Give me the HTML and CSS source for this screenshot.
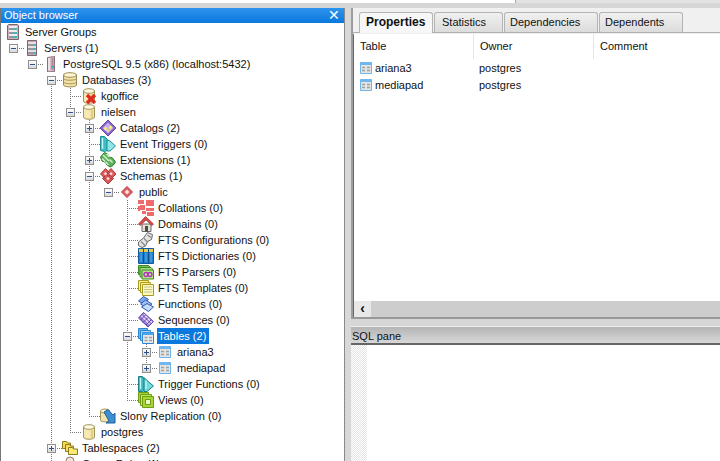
FILE: index.html
```html
<!DOCTYPE html>
<html lang="en">
<head>
<meta charset="utf-8">
<title>pgAdmin III</title>
<link rel="stylesheet" href="styles.css">
</head>
<body>
<svg class="sprite" xmlns="http://www.w3.org/2000/svg">
  <symbol id="ic-group" viewBox="0 0 16 16">
    <path d="M3.500 0.500h9l1 1v14h-11v-14z" fill="#c9b0bb" stroke="#7d6470"/>
    <path d="M4 3h8M4 7h8M4 11h8" stroke="#fff" stroke-width="1.400"/>
    <path d="M4 5h8M4 9h8M4 13h8" stroke="#7f8f9a" stroke-width="1.400"/>
    <path d="M9 5h3M9 9h3M9 13h3" stroke="#2fc0c0" stroke-width="1.400"/>
  </symbol>
  <symbol id="ic-server" viewBox="0 0 16 16">
    <path d="M3.500 0.500h9v15h-9z" fill="#c4a8b3" stroke="#7d6470"/>
    <path d="M4 3h8M4 7h8M4 11h8" stroke="#f4f0f2" stroke-width="1.500"/>
    <path d="M4 5h8M4 9h8M4 13h8" stroke="#8b8f9a" stroke-width="1.400"/>
    <path d="M9 5h3M9 9h3M9 13h3" stroke="#27c2c2" stroke-width="1.400"/>
  </symbol>
  <symbol id="ic-pg" viewBox="0 0 16 16">
    <path d="M4.500 1.500l7-1v15l-7 0.500z" fill="#d7bcc6" stroke="#8a6d78"/>
    <path d="M6 2v12" stroke="#f6eef1" stroke-width="1.500"/>
    <path d="M9.500 2v12" stroke="#a88c97" stroke-width="2"/>
    <path d="M8 11h3" stroke="#27b8c2" stroke-width="2"/>
  </symbol>
  <symbol id="ic-dbs" viewBox="0 0 16 16">
    <path d="M1.500 3v10c0 2.500 13 2.500 13 0V3z" fill="#f2e2a6" stroke="#9a8a52"/>
    <ellipse cx="8" cy="3" rx="6.500" ry="2.300" fill="#fff6d2" stroke="#9a8a52"/>
    <path d="M1.500 6.500c0 2.300 13 2.300 13 0M1.500 10c0 2.300 13 2.300 13 0" fill="none" stroke="#a8975c"/>
  </symbol>
  <symbol id="ic-db" viewBox="0 0 16 16">
    <path d="M2.500 3v10c0 3 11 3 11 0V3z" fill="#f6e9b4" stroke="#a39459"/>
    <ellipse cx="8" cy="3" rx="5.500" ry="2.300" fill="#fffbe6" stroke="#a39459"/>
    <path d="M11 5.500v9" stroke="#dfcd8a" stroke-width="2.500"/>
  </symbol>
  <symbol id="ic-dbx" viewBox="0 0 16 16">
    <use href="#ic-db"/>
    <path d="M6 7l8 8M14 7l-8 8" stroke="#e02a20" stroke-width="3.400"/>
  </symbol>
  <symbol id="ic-catalog" viewBox="0 0 16 16">
    <path d="M8 0L16 8 8 16 0 8z" fill="#8a62cc" stroke="#6a45a8"/>
    <path d="M8 2.500L13.500 8 8 13.500 2.500 8z" fill="#c4adef"/>
    <path d="M5.500 6.500L7.500 8.500 5.500 10.500 3.500 8.500zM10.500 5.500L12.500 7.500 10.500 9.500 8.500 7.500zM8 9L9.500 10.500 8 12 6.500 10.500z" fill="#f6f06a"/>
  </symbol>
  <symbol id="ic-trigger" viewBox="0 0 16 16">
    <path d="M0.500 0.500l4 0 4 4V14l-4 1.500-4-1z" fill="#3fbcc4" stroke="#1f8f96"/>
    <path d="M7 4l3 1 5.500 5-5.500 5-3 0z" fill="#8fe6e6" stroke="#1f8f96"/>
    <path d="M2.500 2v11" stroke="#c8f4f4" stroke-width="1.400"/>
  </symbol>
  <symbol id="ic-ext" viewBox="0 0 16 16">
    <path d="M0.500 5l4-4.500 3 1.500 2 3 3 1 3 4-2.500 3.500-3 1.500-3-2-2-3-3-1z" fill="#5cb05c" stroke="#2a7a30"/>
    <path d="M3 3l3 3M6.500 2l3 3M2 6.500l3 3M6 6l3 3M5.500 10l3 3M9.500 7.500l3 3" stroke="#d2f0cc" stroke-width="1.500"/>
  </symbol>
  <symbol id="ic-schemas" viewBox="0 0 16 16">
    <path d="M5.500 0.500L11 6 5.500 11 0.500 6zM11 0.500L16 6l-5 5-5-5zM8 5l5.500 5.500L8 16 2.500 10.500z" fill="#dc5c5c" stroke="#b03636"/>
    <path d="M5.500 4L7.300 5.800 5.500 7.600 3.700 5.800zM11 4l1.800 1.800L11 7.600 9.200 5.800zM8 8.700l1.800 1.800L8 12.300 6.200 10.500z" fill="#fcdede"/>
  </symbol>
  <symbol id="ic-schema" viewBox="0 0 16 16">
    <path d="M8 2.500L13.500 8 8 13.500 2.500 8z" fill="#dc5f5f" stroke="#b83a3a"/>
    <path d="M8 5.500L10.500 8 8 10.500 5.500 8z" fill="#fcdede"/>
  </symbol>
  <symbol id="ic-coll" viewBox="0 0 16 16">
    <path d="M0 0h6v4H0zM8 0h8v6H8zM2 5h5v5H2zM0 6h2v5H0zM8 8h8v3H8zM9 12h7v4H9zM4 11h4v3H4z" fill="#ee6c6c"/>
  </symbol>
  <symbol id="ic-domain" viewBox="0 0 16 16">
    <path d="M4 8h9v7.500H4z" fill="#e6e0d6" stroke="#6b6b6b"/>
    <path d="M7 10h3v5.500H7z" fill="#4b4b4b"/>
    <path d="M0.500 8L7.500 0.500 15.500 8 14 9.500 8 4 2 9.500z" fill="#d84a4a" stroke="#a02c2c" stroke-width=".7"/>
  </symbol>
  <symbol id="ic-ftsc" viewBox="0 0 16 16">
    <path d="M0.500 10l5-4 4-5.500 5 2-1 5-4 2-2 4.500-3.500 1.500-3.500-2z" fill="#e4e4e4" stroke="#666"/>
    <path d="M3 9.500l4 4M6 6.500l4 4M9.500 3l3.500 2.500" stroke="#888" stroke-width="1.200"/>
  </symbol>
  <symbol id="ic-ftsd" viewBox="0 0 16 16">
    <path d="M0.500 0.500h15v15h-15z" fill="#1c7fd0" stroke="#155c9e"/>
    <path d="M1 1h14v3H1z" fill="#e4c94a"/>
    <path d="M5.500 1v14M10.500 1v14" stroke="#0d4f8e"/>
    <path d="M3 5v9M8 5v9M13 5v9" stroke="#63aee6"/>
  </symbol>
  <symbol id="ic-ftsp" viewBox="0 0 16 16">
    <path d="M0.500 1.500h10l2 2v7h-12z" fill="#6fc04c" stroke="#3e8a2a"/>
    <path d="M2 3.500h11l1.500 1.500v8H2z" fill="#a4dd7d" stroke="#3e8a2a"/>
    <path d="M4 6h11.500v9H4z" fill="#b9e68c" stroke="#3e8a2a"/>
    <circle cx="8" cy="10.500" r="2" fill="none" stroke="#b02ec0" stroke-width="1.300"/>
    <circle cx="12" cy="10.500" r="2" fill="none" stroke="#b02ec0" stroke-width="1.300"/>
  </symbol>
  <symbol id="ic-ftst" viewBox="0 0 16 16">
    <path d="M0.500 0.500h10v10h-10z" fill="#fbf08a" stroke="#a99a20"/>
    <path d="M2.500 2.500h10v10h-10z" fill="#fbf08a" stroke="#a99a20"/>
    <path d="M4.500 4.500h11v11h-11z" fill="#fdf7c0" stroke="#a99a20"/>
    <path d="M6.500 7h7M6.500 9.500h7M6.500 12h7" stroke="#8a8a55" stroke-dasharray="1 1"/>
  </symbol>
  <symbol id="ic-func" viewBox="0 0 16 16">
    <path d="M0.500 5l5-4.500 5 3-5 4.500z" fill="#7aa8ee" stroke="#3058b0"/>
    <path d="M2.500 8l5-4 6.500 4-5 4z" fill="#9ec2f5" stroke="#3058b0"/>
    <path d="M3.500 11l5.500-3.500 6.500 3.500-5 4.500z" fill="#c6dcfa" stroke="#3058b0"/>
  </symbol>
  <symbol id="ic-seq" viewBox="0 0 16 16">
    <path d="M0.500 6l5-5.500 10 9-5.500 5.500z" fill="#9d7fdc" stroke="#5f44a0"/>
    <path d="M3.500 4l8 8M6 2.500l8 8" stroke="#eee6fb" stroke-width="1.200"/>
    <path d="M2.500 8l5-5M5 10.500l5-5M8 13l5-5" stroke="#5f44a0"/>
  </symbol>
  <symbol id="ic-tables" viewBox="0 0 16 16">
    <path d="M0.500 0.500h9v10h-9z" fill="#6db5ef" stroke="#2e86d0"/>
    <path d="M2.500 2.500h10v10h-10z" fill="#a7d5f6" stroke="#2e86d0"/>
    <path d="M4.500 4.500h11v11h-11z" fill="#e6e8e8" stroke="#2e86d0"/>
    <path d="M4.500 4.500h11v2.500h-11z" fill="#4ea6ea"/>
    <path d="M6.500 9.500h3M11 9.500h3M6.500 12.500h3M11 12.500h3" stroke="#a0a0a0" stroke-width="1.500"/>
  </symbol>
  <symbol id="ic-table" viewBox="0 0 16 16">
    <path d="M2.500 2.500h11v11h-11z" fill="#e2e5e5" stroke="#6fb4e8"/>
    <path d="M2.500 2.500h11v2.500h-11z" fill="#6fb8ef"/>
    <path d="M4 7.500h3M9 7.500h3M4 10.500h3M9 10.500h3" stroke="#a0a0a0" stroke-width="1.500"/>
  </symbol>
  <symbol id="ic-tfunc" viewBox="0 0 16 16">
    <path d="M0.500 0.500h4l3 4v9.500l-3 1.500h-4z" fill="#3fb8bc" stroke="#1a7f86"/>
    <path d="M6 1.500l3 3 6.500 5.500-6.500 5.500H6z" fill="#6cdcdc" stroke="#1a7f86"/>
    <path d="M2.500 2v11M8 5v8" stroke="#c8f4f4" stroke-width="1.300"/>
  </symbol>
  <symbol id="ic-views" viewBox="0 0 16 16">
    <path d="M0.500 0.500h10v10h-10z" fill="#a4d636" stroke="#6f9e15"/>
    <path d="M2.500 2.500h11v11h-11z" fill="#bfe75a" stroke="#6f9e15"/>
    <path d="M4.500 4.500h11v11h-11z" fill="#a4d636" stroke="#6f9e15"/>
    <path d="M7.500 7.500h5v5h-5z" fill="#eff9c8" stroke="#6f9e15"/>
  </symbol>
  <symbol id="ic-slony" viewBox="0 0 16 16">
    <path d="M0.500 3v9c0 2.500 9 2.500 9 0V3z" fill="#f2e4ae" stroke="#a39459"/>
    <ellipse cx="5" cy="3" rx="4.500" ry="2" fill="#fff8dc" stroke="#a39459"/>
    <path d="M4 4l4-2.500 5 5.500 2-2v10H6l3-2z" fill="#3e8fd2" stroke="#1f5f9d"/>
  </symbol>
  <symbol id="ic-tspace" viewBox="0 0 16 16">
    <path d="M0.500 1.500h4l1 1.500h3v5.500h-8z" fill="#f6d95a" stroke="#8f7a16"/>
    <path d="M3.500 4.500h4l1 1.500h3v5.500h-8z" fill="#f8df66" stroke="#8f7a16"/>
    <path d="M6.500 7.500h4l1 1.500h4v5.500h-9z" fill="#fae878" stroke="#8f7a16"/>
  </symbol>
  <symbol id="ic-role" viewBox="0 0 16 16">
    <circle cx="8" cy="5" r="4" fill="#f5e3d6" stroke="#8a7a70"/>
    <path d="M2 15c0-5 12-5 12 0z" fill="#d9c4b6" stroke="#8a7a70"/>
  </symbol>
</svg>

<div class="app">
  <div class="topstrip"><div class="topstrip-left"></div></div>
  <div class="main">
    <section class="browser">
      <header class="browser-title"><span>Object browser</span><span class="close">✕</span></header>
      <div class="tree">
        <div class="row"><svg class="icon"><use href="#ic-group"/></svg><span class="label">Server Groups</span></div>
        <div class="row"><span class="c h"><i class="x minus"></i></span><svg class="icon"><use href="#ic-server"/></svg><span class="label">Servers (1)</span></div>
        <div class="row"><span class="c"></span><span class="c h"><i class="x minus"></i></span><svg class="icon"><use href="#ic-pg"/></svg><span class="label">PostgreSQL 9.5 (x86) (localhost:5432)</span></div>
        <div class="row"><span class="c"></span><span class="c"></span><span class="c s"><i class="x minus"></i></span><svg class="icon"><use href="#ic-dbs"/></svg><span class="label">Databases (3)</span></div>
        <div class="row"><span class="c"></span><span class="c"></span><span class="c v"></span><span class="c t"></span><svg class="icon"><use href="#ic-dbx"/></svg><span class="label">kgoffice</span></div>
        <div class="row"><span class="c"></span><span class="c"></span><span class="c v"></span><span class="c t"><i class="x minus"></i></span><svg class="icon"><use href="#ic-db"/></svg><span class="label">nielsen</span></div>
        <div class="row"><span class="c"></span><span class="c"></span><span class="c v"></span><span class="c v"></span><span class="c t"><i class="x plus"></i></span><svg class="icon"><use href="#ic-catalog"/></svg><span class="label">Catalogs (2)</span></div>
        <div class="row"><span class="c"></span><span class="c"></span><span class="c v"></span><span class="c v"></span><span class="c t"></span><svg class="icon"><use href="#ic-trigger"/></svg><span class="label">Event Triggers (0)</span></div>
        <div class="row"><span class="c"></span><span class="c"></span><span class="c v"></span><span class="c v"></span><span class="c t"><i class="x plus"></i></span><svg class="icon"><use href="#ic-ext"/></svg><span class="label">Extensions (1)</span></div>
        <div class="row"><span class="c"></span><span class="c"></span><span class="c v"></span><span class="c v"></span><span class="c t"><i class="x minus"></i></span><svg class="icon"><use href="#ic-schemas"/></svg><span class="label">Schemas (1)</span></div>
        <div class="row"><span class="c"></span><span class="c"></span><span class="c v"></span><span class="c v"></span><span class="c v"></span><span class="c h"><i class="x minus"></i></span><svg class="icon"><use href="#ic-schema"/></svg><span class="label">public</span></div>
        <div class="row"><span class="c"></span><span class="c"></span><span class="c v"></span><span class="c v"></span><span class="c v"></span><span class="c"></span><span class="c t"></span><svg class="icon"><use href="#ic-coll"/></svg><span class="label">Collations (0)</span></div>
        <div class="row"><span class="c"></span><span class="c"></span><span class="c v"></span><span class="c v"></span><span class="c v"></span><span class="c"></span><span class="c t"></span><svg class="icon"><use href="#ic-domain"/></svg><span class="label">Domains (0)</span></div>
        <div class="row"><span class="c"></span><span class="c"></span><span class="c v"></span><span class="c v"></span><span class="c v"></span><span class="c"></span><span class="c t"></span><svg class="icon"><use href="#ic-ftsc"/></svg><span class="label">FTS Configurations (0)</span></div>
        <div class="row"><span class="c"></span><span class="c"></span><span class="c v"></span><span class="c v"></span><span class="c v"></span><span class="c"></span><span class="c t"></span><svg class="icon"><use href="#ic-ftsd"/></svg><span class="label">FTS Dictionaries (0)</span></div>
        <div class="row"><span class="c"></span><span class="c"></span><span class="c v"></span><span class="c v"></span><span class="c v"></span><span class="c"></span><span class="c t"></span><svg class="icon"><use href="#ic-ftsp"/></svg><span class="label">FTS Parsers (0)</span></div>
        <div class="row"><span class="c"></span><span class="c"></span><span class="c v"></span><span class="c v"></span><span class="c v"></span><span class="c"></span><span class="c t"></span><svg class="icon"><use href="#ic-ftst"/></svg><span class="label">FTS Templates (0)</span></div>
        <div class="row"><span class="c"></span><span class="c"></span><span class="c v"></span><span class="c v"></span><span class="c v"></span><span class="c"></span><span class="c t"></span><svg class="icon"><use href="#ic-func"/></svg><span class="label">Functions (0)</span></div>
        <div class="row"><span class="c"></span><span class="c"></span><span class="c v"></span><span class="c v"></span><span class="c v"></span><span class="c"></span><span class="c t"></span><svg class="icon"><use href="#ic-seq"/></svg><span class="label">Sequences (0)</span></div>
        <div class="row"><span class="c"></span><span class="c"></span><span class="c v"></span><span class="c v"></span><span class="c v"></span><span class="c"></span><span class="c t"><i class="x minus"></i></span><svg class="icon"><use href="#ic-tables"/></svg><span class="label selected">Tables (2)</span></div>
        <div class="row"><span class="c"></span><span class="c"></span><span class="c v"></span><span class="c v"></span><span class="c v"></span><span class="c"></span><span class="c v"></span><span class="c t"><i class="x plus"></i></span><svg class="icon"><use href="#ic-table"/></svg><span class="label">ariana3</span></div>
        <div class="row"><span class="c"></span><span class="c"></span><span class="c v"></span><span class="c v"></span><span class="c v"></span><span class="c"></span><span class="c v"></span><span class="c e"><i class="x plus"></i></span><svg class="icon"><use href="#ic-table"/></svg><span class="label">mediapad</span></div>
        <div class="row"><span class="c"></span><span class="c"></span><span class="c v"></span><span class="c v"></span><span class="c v"></span><span class="c"></span><span class="c t"></span><svg class="icon"><use href="#ic-tfunc"/></svg><span class="label">Trigger Functions (0)</span></div>
        <div class="row"><span class="c"></span><span class="c"></span><span class="c v"></span><span class="c v"></span><span class="c v"></span><span class="c"></span><span class="c e"></span><svg class="icon"><use href="#ic-views"/></svg><span class="label">Views (0)</span></div>
        <div class="row"><span class="c"></span><span class="c"></span><span class="c v"></span><span class="c v"></span><span class="c e"></span><svg class="icon"><use href="#ic-slony"/></svg><span class="label">Slony Replication (0)</span></div>
        <div class="row"><span class="c"></span><span class="c"></span><span class="c v"></span><span class="c e"></span><svg class="icon"><use href="#ic-db"/></svg><span class="label">postgres</span></div>
        <div class="row"><span class="c"></span><span class="c"></span><span class="c t"><i class="x plus"></i></span><svg class="icon"><use href="#ic-tspace"/></svg><span class="label">Tablespaces (2)</span></div>
        <div class="row"><span class="c"></span><span class="c"></span><span class="c e"></span><svg class="icon"><use href="#ic-role"/></svg><span class="label">Group Roles (1)</span></div>
      </div>
    </section>
    <div class="splitter"></div>
    <div class="right">
      <section class="props">
        <nav class="tabs">
          <span class="tab active tab-a">Properties</span>
          <span class="tab tab-b">Statistics</span>
          <span class="tab tab-c">Dependencies</span>
          <span class="tab tab-d">Dependents</span>
        </nav>
        <div class="list">
          <div class="list-head">
            <span class="col">Table</span>
            <span class="col">Owner</span>
            <span class="col col-last">Comment</span>
          </div>
          <div class="list-body">
            <div class="list-row"><span class="cell"><svg class="small-icon"><use href="#ic-table"/></svg>ariana3</span><span class="cell cell-owner">postgres</span></div>
            <div class="list-row"><span class="cell"><svg class="small-icon"><use href="#ic-table"/></svg>mediapad</span><span class="cell cell-owner">postgres</span></div>
          </div>
          <div class="scrollbar"><span class="scroll-btn">‹</span></div>
        </div>
      </section>
      <section class="sql">
        <header class="sql-title">SQL pane</header>
        <div class="sql-body"><div class="sql-margin"></div></div>
      </section>
    </div>
  </div>
</div>
</body>
</html>
```

FILE: styles.css
```css
* { box-sizing: border-box; }
html, body { margin: 0; padding: 0; height: 100%; overflow: hidden; }
body {
  font-family: "Liberation Sans", Arial, sans-serif;
  font-size: 11px;
  color: #111;
  background: #dcdcdc;
}
.sprite { display: none; }

.app { width: 720px; height: 461px; display: flex; flex-direction: column; overflow: hidden; }
.topstrip { height: 3px; flex: none; background: #e2e2e2; }
.topstrip-left { width: 516px; height: 3px; background: #fff; border-right: 1px solid #aaa; }
.main { flex: 1; display: flex; min-height: 0; padding-top: 5px; background: #d6d6d6; }

.browser { width: 344px; flex: none; display: flex; flex-direction: column; background: #fff; border-left: 1px solid #777; }
.browser-title {
  height: 15px; flex: none; display: flex; justify-content: space-between; align-items: center;
  padding: 0 4px 1px 3px; color: #fff; font-size: 11px;
  background: linear-gradient(#2f94ee, #0a78dc);
}
.close { font-size: 14px; line-height: 15px; }
.tree { flex: 1; min-height: 0; overflow: hidden; padding: 1px 0 0 4px; }

.row { height: 16px; display: flex; align-items: center; white-space: nowrap; }
.c {
  width: 19px; height: 16px; flex: none; display: flex; align-items: center;
  background-repeat: no-repeat;
  --dv: repeating-linear-gradient(to bottom, #777 0 1px, transparent 1px 2px);
  --dh: repeating-linear-gradient(to right, #777 0 1px, transparent 1px 2px);
}
.v { background-image: var(--dv); background-size: 1px 16px; background-position: 8px 0; }
.t { background-image: var(--dv), var(--dh); background-size: 1px 16px, 11px 1px; background-position: 8px 0, 8px 8px; }
.e { background-image: var(--dv), var(--dh); background-size: 1px 9px, 11px 1px; background-position: 8px 0, 8px 8px; }
.s { background-image: var(--dv), var(--dh); background-size: 1px 8px, 11px 1px; background-position: 8px 8px, 8px 8px; }
.h { background-image: var(--dh); background-size: 11px 1px; background-position: 8px 8px; }

.x {
  display: block; width: 9px; height: 9px; margin-left: 4px;
  border: 1px solid #8f8f8f; background-repeat: no-repeat; background-color: #f2f2f2;
}
.minus { background-image: linear-gradient(#2f4f8f, #2f4f8f), linear-gradient(#fff, #d8d8d8); background-size: 5px 1px, 100% 100%; background-position: 1px 3px, 0 0; }
.plus { background-image: linear-gradient(#2f4f8f, #2f4f8f), linear-gradient(#2f4f8f, #2f4f8f), linear-gradient(#fff, #d8d8d8); background-size: 5px 1px, 1px 5px, 100% 100%; background-position: 1px 3px, 3px 1px, 0 0; }

.icon { width: 16px; height: 16px; flex: none; overflow: visible; }
.label { margin-left: 3px; padding: 0 1px; height: 16px; line-height: 16px; }
.selected { background: #0a78dc; color: #fff; width: 52px; }

.splitter { width: 7px; flex: none; border-left: 1px solid #8a8a8a; background: #d8d8d8; }
.right { flex: 1; min-width: 0; display: flex; flex-direction: column; overflow: hidden; }

.props { height: 311px; flex: none; display: flex; flex-direction: column; background: #f0f0f0; border-left: 2px solid #9c9c9c; border-bottom: 2px solid #999; }
.tabs { height: 25px; flex: none; display: flex; padding: 4px 0 0 6px; border-bottom: 1px solid #b0b0b0; }
.tab {
  height: 20px; line-height: 19px; text-align: left; padding-left: 6px; flex: none;
  border: 1px solid #b4b4b4; border-bottom: 0; border-radius: 3px 3px 0 0;
  background: linear-gradient(#f0f0f0, #dcdcdc); margin-right: 1px;
}
.active { background: #f7f7f7; font-weight: bold; font-size: 12px; height: 21px; }
.tab-a { width: 74px; }
.tab-b { width: 69px; padding-left: 7px; }
.tab-c { width: 94px; padding-left: 5px; }
.tab-d { width: 84px; padding-left: 5px; }

.list { flex: 1; min-height: 0; display: flex; flex-direction: column; margin-top: 1px; background: #fff; border-left: 1px solid #666; }
.list-head { height: 25px; flex: none; display: flex; }
.col { width: 120px; flex: none; padding: 6px 0 0 6px; border-right: 1px solid #e4e4e4; }
.col-last { border-right: 0; }
.list-body { flex: 1; min-height: 0; }
.list-row { height: 17px; display: flex; align-items: center; }
.cell { width: 120px; flex: none; display: flex; align-items: center; padding-left: 5px; }
.cell-owner { padding-left: 5px; }
.small-icon { width: 16px; height: 16px; margin-right: 1px; margin-left: -1px; flex: none; }
.scrollbar { height: 16px; flex: none; background: #cdcdcd; display: flex; }
.scroll-btn { width: 17px; text-align: center; background: #e8e8e8; font-weight: bold; font-size: 14px; line-height: 14px; }

.sql { flex: 1; min-height: 0; display: flex; flex-direction: column; margin-left: -1px; padding-top: 7px; }
.sql-title { height: 19px; flex: none; padding: 1px 0 0 2px; line-height: 17px; background: linear-gradient(#b4b4b4, #d8d8d8); border-bottom: 2px solid #666; border-top: 1px solid #eee; }
.sql-body { flex: 1; min-height: 0; background: #fff; border-left: 1px solid #777; }
.sql-margin { width: 16px; height: 100%; background-color: #fff; background-image: repeating-conic-gradient(#e4e4e4 0 25%, #fff 0 50%); background-size: 2px 2px; }
```
